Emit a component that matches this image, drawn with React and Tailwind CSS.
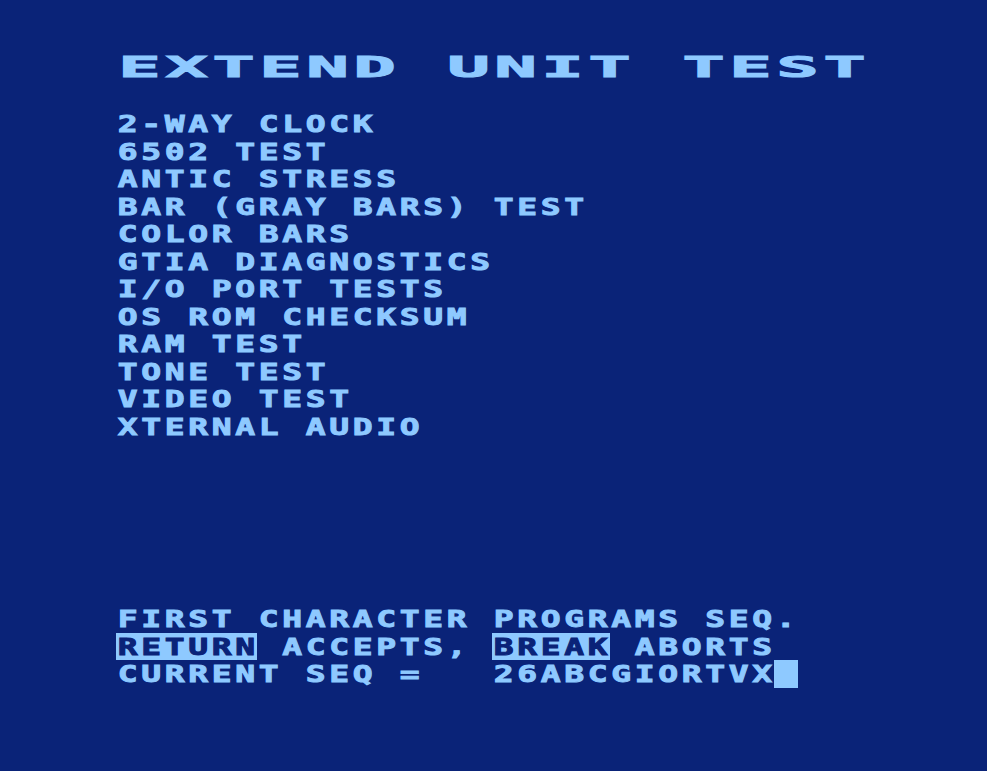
import React from "react";

// each screen line is a list of [text, inverse] segments
const SCREEN = [
  { wide: true, segs: [["EXTEND UNIT TEST", false]] },
  { segs: [] },
  { segs: [["2-WAY CLOCK", false]] },
  { segs: [["6502 TEST", false]] },
  { segs: [["ANTIC STRESS", false]] },
  { segs: [["BAR (GRAY BARS) TEST", false]] },
  { segs: [["COLOR BARS", false]] },
  { segs: [["GTIA DIAGNOSTICS", false]] },
  { segs: [["I/O PORT TESTS", false]] },
  { segs: [["OS ROM CHECKSUM", false]] },
  { segs: [["RAM TEST", false]] },
  { segs: [["TONE TEST", false]] },
  { segs: [["VIDEO TEST", false]] },
  { segs: [["XTERNAL AUDIO", false]] },
  { segs: [] },
  { segs: [] },
  { segs: [] },
  { segs: [] },
  { segs: [] },
  { segs: [] },
  { segs: [["FIRST CHARACTER PROGRAMS SEQ.", false]] },
  {
    segs: [
      ["RETURN", true],
      [" ACCEPTS, ", false],
      ["BREAK", true],
      [" ABORTS", false],
    ],
  },
  {
    segs: [
      ["CURRENT SEQ =   26ABCGIORTVX", false],
      [" ", true],
    ],
  },
];

// one character cell; glyphs are squashed vertically so they keep the
// wide, blocky proportions of the screen font
function Cell({ ch, wide }) {
  return (
    <span
      className={
        wide
          ? "inline-block w-[47px] h-[27.5px] text-center text-[70px] leading-[21.5px] scale-y-[0.4] [-webkit-text-stroke:2.5px_currentcolor]"
          : "inline-block w-[23.5px] h-[27.5px] text-center text-[33px] leading-[27.5px] scale-y-[0.715] [-webkit-text-stroke:1.3px_currentcolor]"
      }
    >
      {ch === " " ? "\u00a0" : ch}
    </span>
  );
}

function Line({ line }) {
  return (
    <div className="flex h-[27.5px]">
      {line.segs.map(([text, inverse], i) => (
        <span
          key={i}
          className={inverse ? "flex bg-[#8ec9ff] text-[#0a2378]" : "flex"}
        >
          {text.split("").map((ch, j) => (
            <Cell key={j} ch={ch} wide={line.wide} />
          ))}
        </span>
      ))}
    </div>
  );
}

export default function App() {
  return (
    <div className="w-[987px] h-[771px] overflow-hidden bg-[#0a2378] text-[#8ec9ff] font-['DejaVu_Sans_Mono',monospace] font-bold pt-[55px] pl-[116px]">
      {SCREEN.map((line, i) => (
        <Line key={i} line={line} />
      ))}
    </div>
  );
}
